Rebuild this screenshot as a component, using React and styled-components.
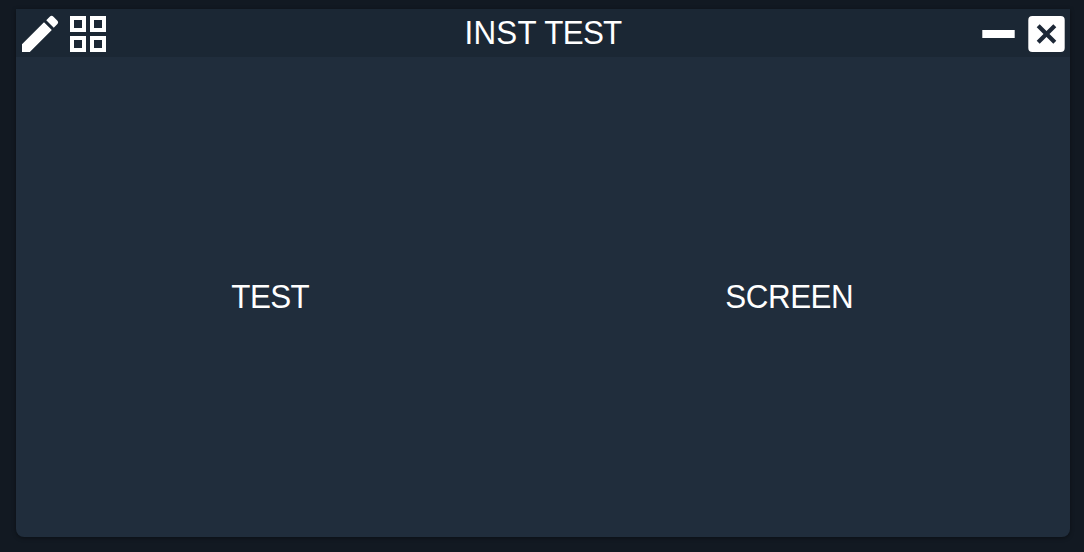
import React from "react";
import styled, { createGlobalStyle } from "styled-components";

const GlobalStyle = createGlobalStyle`
  * { box-sizing: border-box; }
  body { margin: 0; background: #121922; overflow: hidden; }
`;

const Desktop = styled.main`
  height: 552px;
  padding: 9px 14px 15px 16px;
  font-family: "Liberation Sans", Arial, sans-serif;
  font-size: 33px;
  line-height: 48px;
  color: #fff;
`;

const Window = styled.section`
  height: 528px;
  display: flex;
  flex-direction: column;
  background: #202d3c;
  border-radius: 0 0 8px 8px;
  overflow: hidden;
  box-shadow: 0 1px 4px rgba(0, 0, 0, 0.4);
`;

const TitleBar = styled.header`
  height: 48px;
  flex: none;
  display: grid;
  grid-template-columns: 96px 1fr 96px;
  background: #1b2734;
`;

const Actions = styled.div`
  display: flex;
  padding-top: 1px;
`;

const IconButton = styled.button`
  width: 48px;
  height: 48px;
  padding: 0;
  border: 0;
  background: none;
  color: #fff;

  svg { display: block; }
`;

const Title = styled.h1`
  margin: 0;
  display: flex;
  justify-content: center;
  gap: 8px;
  font: inherit;
  white-space: nowrap;
  transform: scaleX(0.95);
`;

const Word = styled.span`
  letter-spacing: ${(p) => p.$tracking}px;
`;

const Content = styled.div`
  flex: 1;
  display: grid;
  grid-template-columns: 509px 529px;
  align-items: center;
  text-align: center;
`;

const Label = styled.div`
  letter-spacing: ${(p) => p.$tracking}px;
  text-indent: ${(p) => p.$tracking}px;
  transform: scaleX(0.95);
`;

const Icon = ({ children, nudge = 0 }) => (
  <svg width="48" height="48" viewBox={`${-nudge} 0 24 24`} fill="currentColor" fillRule="evenodd">
    {children}
  </svg>
);

export default function App() {
  return (
    <Desktop>
      <GlobalStyle />
      <Window>
        <TitleBar>
          <Actions>
            <IconButton aria-label="Edit">
              <Icon>
                <path d="M3 17.1V21h3.9L17.9 10l-3.9-3.9L3 17.1zM20.6 7.15a1.35 1.35 0 0 0 0-1.9l-1.85-1.85a1.35 1.35 0 0 0-1.9 0l-1.72 1.72 3.75 3.75 1.72-1.72z" />
              </Icon>
            </IconButton>
            <IconButton aria-label="Grid">
              <Icon>
                <path d="M3 3v8h8V3H3zm6 6H5V5h4v4zM3 13v8h8v-8H3zm6 6H5v-4h4v4zM13 3v8h8V3h-8zm6 6h-4V5h4v4zM13 13v8h8v-8h-8zm6 6h-4v-4h4v4z" />
              </Icon>
            </IconButton>
          </Actions>
          <Title>
            <Word $tracking={0.2}>INST</Word>
            <Word $tracking={-0.8}>TEST</Word>
          </Title>
          <Actions>
            <IconButton aria-label="Minimize">
              <Icon nudge={0.25}>
                <path d="M3.9 10h16.2v4H3.9z" />
              </Icon>
            </IconButton>
            <IconButton aria-label="Close">
              <Icon nudge={0.25}>
                <rect x="2.9" y="3" width="18.2" height="18" rx="2" />
                <path d="M7.85 7.85L16.15 16.15M16.15 7.85L7.85 16.15" fill="none" stroke="#1d2837" strokeWidth="2.1" />
              </Icon>
            </IconButton>
          </Actions>
        </TitleBar>
        <Content>
          <Label $tracking={-0.6}>TEST</Label>
          <Label $tracking={-0.5}>SCREEN</Label>
        </Content>
      </Window>
    </Desktop>
  );
}
